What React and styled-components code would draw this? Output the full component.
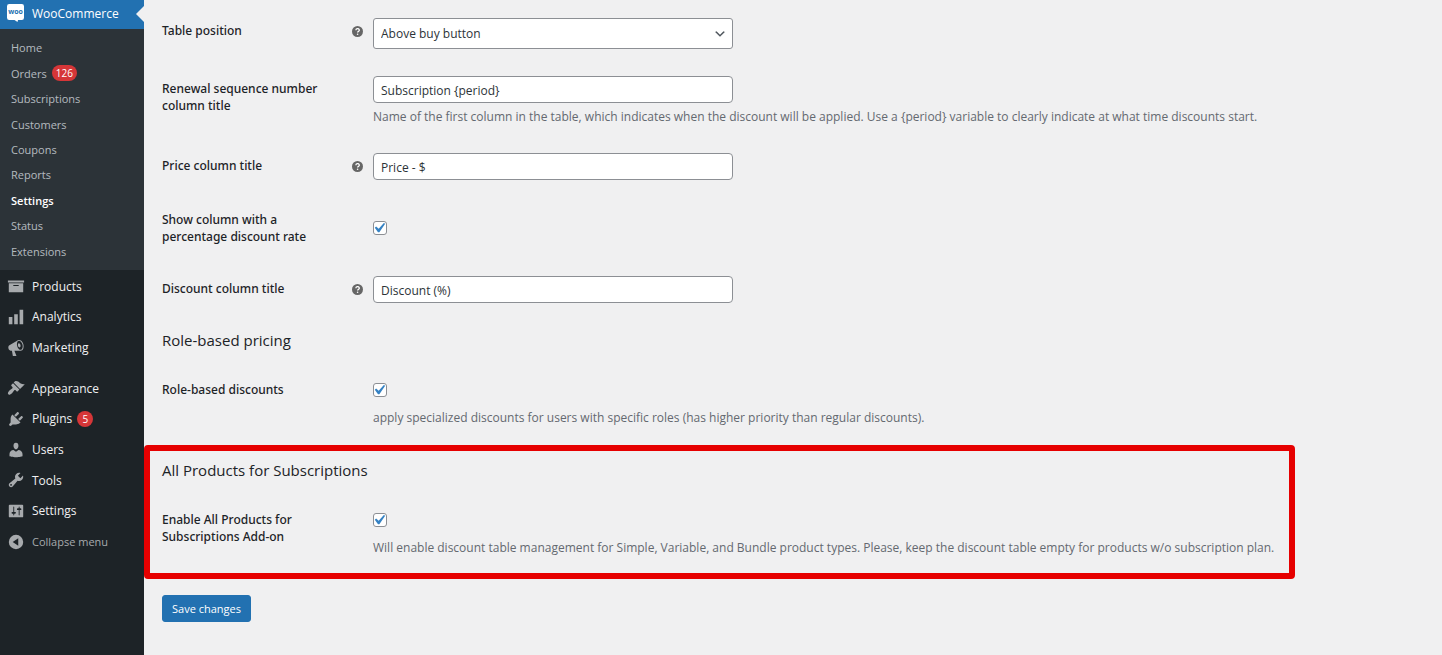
import React, { useState } from "react";
import styled, { createGlobalStyle } from "styled-components";

const GlobalStyle = createGlobalStyle`
  *, *::before, *::after {
    box-sizing: border-box;
  }

  body {
    margin: 0;
    background-color: #f0f0f1;
    color: #1d2327;
    font-family: "Open Sans", "Noto Sans", sans-serif;
    font-size: 12px;
    line-height: 17px;
  }

  input, select, button {
    font: inherit;
  }
`;

const Page = styled.div`
  display: flex;
  min-height: 100vh;
`;

const Sidebar = styled.nav`
  flex: none;
  width: 144px;
  background-color: #1d2327;
`;

const CurrentMenu = styled.a`
  position: relative;
  display: flex;
  align-items: center;
  gap: 8px;
  height: 29px;
  padding: 0 7px 3px;
  background-color: #2271b1;
  color: #fff;
  font-size: 12px;
  text-decoration: none;

  &::after {
    content: "";
    position: absolute;
    right: 0;
    top: 6px;
    border: 8px solid transparent;
    border-left-width: 0;
    border-right-color: #f0f0f1;
  }
`;

const SubMenu = styled.ul`
  display: grid;
  grid-auto-rows: 1fr;
  height: 241px;
  margin: 0;
  padding: 6px 0;
  background-color: #2c3338;
  list-style: none;
`;

const SubLink = styled.a`
  display: flex;
  align-items: center;
  height: 100%;
  padding: 0 11px;
  color: ${(props) => (props.$active ? "#fff" : "rgba(240, 246, 252, 0.7)")};
  font-size: 11px;
  font-weight: ${(props) => (props.$active ? 600 : 400)};
  text-decoration: none;
`;

const Badge = styled.span`
  min-width: 16px;
  height: 16px;
  margin-left: 5px;
  padding: 0 4px;
  border-radius: 8px;
  background-color: #d63638;
  color: #fff;
  font-size: 10px;
  line-height: 16px;
  text-align: center;
`;

const Menu = styled.ul`
  display: grid;
  grid-auto-rows: 1fr;
  height: ${(props) => props.$height};
  margin: 1px 0 10px;
  padding: 0;
  list-style: none;
`;

const MenuLink = styled.a`
  display: flex;
  align-items: center;
  height: 100%;
  padding: 0 7px;
  color: #f0f0f1;
  font-size: 12px;
  text-decoration: none;

  svg {
    flex: none;
    width: 18px;
    height: 18px;
    margin-right: 7px;
    fill: #a7aaad;
  }
`;

const CollapseButton = styled(MenuLink)`
  width: 100%;
  border: 0;
  background: none;
  color: #a7aaad;
  font-size: 11px;
`;

const Content = styled.form`
  flex: 1;
  min-width: 0;
  padding-top: 3px;
`;

const Section = styled.section`
  padding: 0 18px;
`;

const HighlightedSection = styled.section`
  margin: 6px 147px 16px 0;
  padding: 0 12px 4px;
  border: 6px solid #e60000;
  border-radius: 4px;
`;

const SectionTitle = styled.h2`
  margin: ${(props) => props.$top} 0 12px;
  font-size: 15px;
  font-weight: 500;
  line-height: 20px;
`;

const Row = styled.div`
  display: grid;
  grid-template-columns: 190px 21px 1fr;
`;

const Label = styled.label`
  max-width: 170px;
  padding: 19px 0 16px;
  font-family: "Noto Sans", sans-serif;
  font-weight: 500;
`;

const Help = styled.span`
  padding-top: 23px;

  svg {
    display: block;
    width: 11px;
    height: 11px;
  }
`;

const Control = styled.div`
  grid-column: 3;
  align-self: center;
  padding: 15px 0 12px;
`;

const TextInput = styled.input`
  display: block;
  width: 360px;
  height: 27px;
  padding: 1px 7px 0;
  border: 1px solid #8c8f94;
  border-radius: 4px;
  background-color: #fff;
  color: #2c3338;
`;

const SelectBox = styled.div`
  display: grid;
  grid-template-columns: 1fr 20px;
  align-items: center;
  width: 360px;

  svg {
    grid-area: 1 / 2;
    width: 14px;
    height: 14px;
    fill: #50575e;
    pointer-events: none;
  }
`;

const Select = styled.select`
  grid-area: 1 / 1 / 2 / 3;
  height: 31px;
  padding: 0 7px;
  border: 1px solid #8c8f94;
  border-radius: 3px;
  background-color: #fff;
  color: #2c3338;
  appearance: none;
`;

const CheckLine = styled.div`
  display: grid;
  grid-template-columns: 14px;
  align-items: center;
  height: 27px;
  padding-bottom: 1px;

  svg {
    grid-area: 1 / 1;
    width: 14px;
    height: 14px;
    fill: #3582c4;
    pointer-events: none;
  }
`;

const CheckInput = styled.input`
  grid-area: 1 / 1;
  width: 14px;
  height: 14px;
  margin: 0;
  border: 1px solid #8c8f94;
  border-radius: 3px;
  background-color: #fff;
  appearance: none;

  &:not(:checked) + svg {
    visibility: hidden;
  }
`;

const Description = styled.p`
  margin: 4px 0 0;
  color: #646970;
  line-height: 19px;
`;

const SaveButton = styled.button`
  display: block;
  height: 27px;
  margin-left: 18px;
  padding: 0 9px;
  border: 1px solid #2271b1;
  border-radius: 3px;
  background-color: #2271b1;
  color: #fff;
  font-size: 11px;
`;

const icons = {
  archive: "M19 4v2H1V4h18zM2 7h16v10H2V7zm11 3V9H7v1h6z",
  chart: "M18 18V2h-4v16h4zm-6 0V7H8v11h4zm-6 0v-8H2v8h4z",
  megaphone:
    "M18.15 5.94c.46 1.62.38 3.22-.02 4.48-.42 1.28-1.26 2.18-2.3 2.48-.16.06-.26.06-.4.06-.06.02-.12.02-.18.02-.06.02-.14.02-.22.02h-6.8l2.22 5.5c.02.14-.06.26-.14.34-.08.1-.24.16-.34.16H6.95c-.1 0-.26-.06-.34-.16-.08-.08-.16-.2-.14-.34l-1-5.5H4.25l-.02-.02c-.5.06-1.08-.18-1.54-.62s-.88-1.08-1.06-1.88c-.24-.8-.2-1.56-.02-2.2.18-.62.58-1.08 1.06-1.3l.02-.02 9-5.4c.1-.06.18-.1.24-.16.06-.04.14-.08.24-.12.16-.08.28-.12.5-.18 1.04-.3 2.24.1 3.22.98s1.84 2.24 2.26 3.86zm-2.58 5.98h-.02c.4-.1.74-.34 1.04-.7.58-.7.86-1.76.86-3.04 0-.64-.1-1.3-.28-1.98-.34-1.36-1.02-2.5-1.78-3.24s-1.68-1.1-2.46-.88c-.82.22-1.4.96-1.7 2-.32 1.04-.28 2.36.06 3.72.38 1.36 1 2.5 1.8 3.24.78.74 1.62 1.1 2.48.88zm-2.54-7.08c.22-.04.42-.02.62.04.38.16.76.48 1.02 1s.42 1.2.42 1.78c0 .3-.04.56-.12.8-.18.48-.44.84-.86.94-.34.1-.8-.06-1.14-.4s-.64-.86-.78-1.5c-.18-.62-.12-1.24.02-1.72s.48-.84.82-.94z",
  brush:
    "M14.48 11.06L7.41 3.99l1.5-1.5c.5-.56 2.3-.47 3.51.32 1.21.8 1.43 1.28 2.91 2.1 1.18.64 2.45 1.26 4.45.85zm-.71.71L6.7 4.7 4.93 6.47c-.39.39-.39 1.02 0 1.41l1.06 1.06c.39.39.39 1.03 0 1.42-.6.6-1.43 1.11-2.21 1.69-.35.26-.7.53-1.01.84C1.43 14.23.4 16.08 1.4 17.07c.99 1 2.84-.03 4.18-1.36.31-.31.58-.66.85-1.02.57-.78 1.08-1.61 1.69-2.21.39-.39 1.02-.39 1.41 0l1.06 1.06c.39.39 1.02.39 1.41 0z",
  plug:
    "M13.11 4.36L9.87 7.6 8 5.73l3.24-3.24c.35-.34 1.05-.2 1.56.32.52.51.66 1.21.31 1.55zm-8 1.77l.91-1.12 9.01 9.01-1.19.84c-.71.71-2.63 1.16-3.82 1.16H6.14L4.9 17.26c-.59.59-1.54.59-2.12 0-.59-.58-.59-1.53 0-2.12l1.24-1.24v-3.88c0-1.13.4-3.19 1.09-3.89zm7.26 3.97l3.24-3.24c.34-.35 1.04-.21 1.55.31.52.51.66 1.21.31 1.55l-3.24 3.25z",
  user:
    "M10 9.25c-2.27 0-2.73-3.44-2.73-3.44C7 4.02 7.82 2 9.97 2c2.16 0 2.98 2.02 2.71 3.81 0 0-.41 3.44-2.68 3.44zm0 2.57L12.72 10c2.39 0 4.52 2.33 4.52 4.53v2.49s-3.65 1.13-7.24 1.13c-3.65 0-7.24-1.13-7.24-1.13v-2.49c0-2.25 1.94-4.48 4.47-4.48z",
  wrench:
    "M16.68 9.77c-1.34 1.34-3.3 1.67-4.95.99l-5.41 6.52c-.99.99-2.59.99-3.58 0s-.99-2.59 0-3.57l6.52-5.42c-.68-1.65-.35-3.61.99-4.95 1.28-1.28 3.12-1.62 4.72-1.06l-2.89 2.89 2.82 2.82 2.86-2.87c.53 1.58.18 3.39-1.08 4.65zM3.81 16.21c.4.39 1.04.39 1.43 0 .4-.4.4-1.04 0-1.43-.39-.4-1.03-.4-1.43 0-.39.39-.39 1.03 0 1.43z",
  sliders:
    "M18 16V4c0-.55-.45-1-1-1H3c-.55 0-1 .45-1 1v12c0 .55.45 1 1 1h14c.55 0 1-.45 1-1zM8 11h1c.55 0 1 .45 1 1s-.45 1-1 1H8v1.5c0 .28-.22.5-.5.5s-.5-.22-.5-.5V13H6c-.55 0-1-.45-1-1s.45-1 1-1h1V5.5c0-.28.22-.5.5-.5s.5.22.5.5V11zm5-2h-1c-.55 0-1-.45-1-1s.45-1 1-1h1V5.5c0-.28.22-.5.5-.5s.5.22.5.5V7h1c.55 0 1 .45 1 1s-.45 1-1 1h-1v5.5c0 .28-.22.5-.5.5s-.5-.22-.5-.5V9z",
  collapse: "M10 2a8 8 0 1 0 0 16 8 8 0 0 0 0-16zm2.5 12.2L6.3 10l6.2-4.2z",
  check: "M14.83 4.89l1.34.94-5.81 8.38H9.02L5.78 9.67l1.34-1.25 2.57 2.4z",
  chevron: "M5 6l5 5 5-5 2 1-7 7-7-7 2-1z",
};

const subItems = [
  { label: "Home" },
  { label: "Orders", count: 126 },
  { label: "Subscriptions" },
  { label: "Customers" },
  { label: "Coupons" },
  { label: "Reports" },
  { label: "Settings", active: true },
  { label: "Status" },
  { label: "Extensions" },
];

const storeItems = [
  { label: "Products", icon: "archive" },
  { label: "Analytics", icon: "chart" },
  { label: "Marketing", icon: "megaphone" },
];

const siteItems = [
  { label: "Appearance", icon: "brush" },
  { label: "Plugins", icon: "plug", count: 5 },
  { label: "Users", icon: "user" },
  { label: "Tools", icon: "wrench" },
  { label: "Settings", icon: "sliders" },
];

function Icon({ name, box = "0 0 20 20" }) {
  return (
    <svg viewBox={box} aria-hidden="true">
      <path d={icons[name]} />
    </svg>
  );
}

function WooLogo() {
  return (
    <svg width="17" height="18" viewBox="0 0 17 18" aria-hidden="true">
      <path
        fill="#fff"
        d="M2.2 0h12.6A2.2 2.2 0 0 1 17 2.2v11.6A2.2 2.2 0 0 1 14.8 16H11l-.5 2-3-2H2.2A2.2 2.2 0 0 1 0 13.8V2.2A2.2 2.2 0 0 1 2.2 0z"
      />
      <text
        x="8.5"
        y="10"
        fill="#2271b1"
        fontSize="7"
        fontWeight="700"
        textAnchor="middle"
      >
        woo
      </text>
    </svg>
  );
}

function MenuItem({ item }) {
  return (
    <li>
      <MenuLink href="#">
        <Icon name={item.icon} />
        {item.label}
        {item.count && <Badge>{item.count}</Badge>}
      </MenuLink>
    </li>
  );
}

function Field({ id, label, help, description, children }) {
  return (
    <Row>
      <Label htmlFor={id}>{label}</Label>
      {help && (
        <Help role="img" aria-label="Help">
          <svg viewBox="0 0 11 11">
            <circle cx="5.5" cy="5.5" r="5.5" fill="#666" />
            <path
              d="M3.9 4.2a1.7 1.5 0 1 1 2.6 1.2q-.9.4-.9 1.1"
              fill="none"
              stroke="#fff"
              strokeWidth="1.3"
            />
            <circle cx="5.6" cy="8.3" r=".8" fill="#fff" />
          </svg>
        </Help>
      )}
      <Control>
        {children}
        {description && <Description>{description}</Description>}
      </Control>
    </Row>
  );
}

function Checkbox({ id }) {
  const [checked, setChecked] = useState(true);
  return (
    <CheckLine>
      <CheckInput
        id={id}
        type="checkbox"
        checked={checked}
        onChange={(e) => setChecked(e.target.checked)}
      />
      <Icon name="check" box="4 3 14 14" />
    </CheckLine>
  );
}

function App() {
  return (
    <>
      <GlobalStyle />
      <Page>
        <Sidebar>
          <CurrentMenu href="#">
            <WooLogo />
            WooCommerce
          </CurrentMenu>
          <SubMenu>
            {subItems.map((item) => (
              <li key={item.label}>
                <SubLink href="#" $active={item.active}>
                  {item.label}
                  {item.count && <Badge>{item.count}</Badge>}
                </SubLink>
              </li>
            ))}
          </SubMenu>
          <Menu $height="92px">
            {storeItems.map((item) => (
              <MenuItem key={item.label} item={item} />
            ))}
          </Menu>
          <Menu $height="184px">
            {siteItems.map((item) => (
              <MenuItem key={item.label} item={item} />
            ))}
            <li>
              <CollapseButton as="button" type="button">
                <Icon name="collapse" />
                Collapse menu
              </CollapseButton>
            </li>
          </Menu>
        </Sidebar>

        <Content onSubmit={(e) => e.preventDefault()}>
          <Section>
            <Field id="position" label="Table position" help>
              <SelectBox>
                <Select id="position" defaultValue="above">
                  <option value="above">Above buy button</option>
                  <option value="below">Below buy button</option>
                </Select>
                <Icon name="chevron" />
              </SelectBox>
            </Field>
            <Field
              id="renewal"
              label="Renewal sequence number column title"
              description="Name of the first column in the table, which indicates when the discount will be applied. Use a {period} variable to clearly indicate at what time discounts start."
            >
              <TextInput id="renewal" defaultValue="Subscription {period}" />
            </Field>
            <Field id="price" label="Price column title" help>
              <TextInput id="price" defaultValue="Price - $" />
            </Field>
            <Field id="rate" label="Show column with a percentage discount rate">
              <Checkbox id="rate" />
            </Field>
            <Field id="discount" label="Discount column title" help>
              <TextInput id="discount" defaultValue="Discount (%)" />
            </Field>
            <SectionTitle $top="15px">Role-based pricing</SectionTitle>
            <Field
              id="roles"
              label="Role-based discounts"
              description="apply specialized discounts for users with specific roles (has higher priority than regular discounts)."
            >
              <Checkbox id="roles" />
            </Field>
          </Section>
          <HighlightedSection>
            <SectionTitle $top="9px">All Products for Subscriptions</SectionTitle>
            <Field
              id="addon"
              label="Enable All Products for Subscriptions Add-on"
              description="Will enable discount table management for Simple, Variable, and Bundle product types. Please, keep the discount table empty for products w/o subscription plan."
            >
              <Checkbox id="addon" />
            </Field>
          </HighlightedSection>
          <SaveButton type="submit">Save changes</SaveButton>
        </Content>
      </Page>
    </>
  );
}

export default App;
